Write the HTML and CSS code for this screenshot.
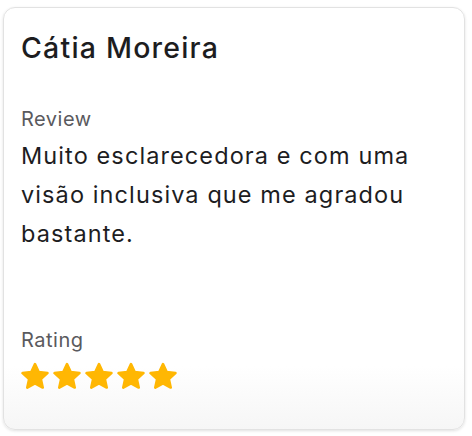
FILE: index.html
```html
<!DOCTYPE html>
<html lang="pt">
<head>
    <meta charset="UTF-8">
    <meta name="viewport" content="width=device-width, initial-scale=1.0">
    <title>Review</title>
    <link rel="stylesheet" href="styles.css">
</head>
<body>
    <div class="card">
        <h2 class="name">Cátia Moreira</h2>

        <div class="review">
            <div class="label">Review</div>
            <p class="text">Muito esclarecedora e com uma visão inclusiva que me agradou bastante.</p>
        </div>

        <div class="rating">
            <div class="label">Rating</div>
            <div class="stars">
                <svg class="star" viewBox="2.2 2 19.6 19"><path d="M12 3.2l2.6 5.6 6.1.7-4.6 4.1 1.3 6L12 16.6l-5.4 3 1.3-6-4.6-4.1 6.1-.7z"/></svg>
                <svg class="star" viewBox="2.2 2 19.6 19"><path d="M12 3.2l2.6 5.6 6.1.7-4.6 4.1 1.3 6L12 16.6l-5.4 3 1.3-6-4.6-4.1 6.1-.7z"/></svg>
                <svg class="star" viewBox="2.2 2 19.6 19"><path d="M12 3.2l2.6 5.6 6.1.7-4.6 4.1 1.3 6L12 16.6l-5.4 3 1.3-6-4.6-4.1 6.1-.7z"/></svg>
                <svg class="star" viewBox="2.2 2 19.6 19"><path d="M12 3.2l2.6 5.6 6.1.7-4.6 4.1 1.3 6L12 16.6l-5.4 3 1.3-6-4.6-4.1 6.1-.7z"/></svg>
                <svg class="star" viewBox="2.2 2 19.6 19"><path d="M12 3.2l2.6 5.6 6.1.7-4.6 4.1 1.3 6L12 16.6l-5.4 3 1.3-6-4.6-4.1 6.1-.7z"/></svg>
            </div>
        </div>
    </div>
</body>
</html>
```

FILE: styles.css
```css
html, body {
    height: 100%;
}

body {
    font-family: Inter, "Noto Sans", sans-serif;
    background-color: #fff;
    margin: 0;
    padding: 7px 7px 6px 3px;
    box-sizing: border-box;
}

.card {
    height: 100%;
    box-sizing: border-box;
    display: flex;
    flex-direction: column;
    padding: 23px 17px 0 17px;
    border: 1px solid #e2e2e2;
    border-radius: 12px;
    background: linear-gradient(to bottom, #fff 0%, #fff 85%, #f6f6f6 100%);
    box-shadow: 0 1px 3px rgba(0, 0, 0, 0.12);
}

.name {
    margin: 0;
    font-size: 28.5px;
    font-weight: 500;
    line-height: 34px;
    letter-spacing: 1.2px;
    color: #1d1d1f;
}

.review {
    margin-top: 42px;
}

.label {
    font-size: 20px;
    line-height: 24px;
    letter-spacing: 0.5px;
    color: #5a5a5e;
}

.text {
    margin: 5px 0 0 0;
    font-size: 23.5px;
    line-height: 39px;
    letter-spacing: 1.1px;
    color: #1d1d1f;
}

.rating {
    margin-top: auto;
    padding-bottom: 39px;
}

.stars {
    display: flex;
    gap: 4px;
    margin-top: 10px;
}

.star {
    width: 28px;
    height: 28px;
}

.star path {
    fill: #ffb703;
    stroke: #ffb703;
    stroke-width: 1.8;
    stroke-linejoin: round;
}
```
